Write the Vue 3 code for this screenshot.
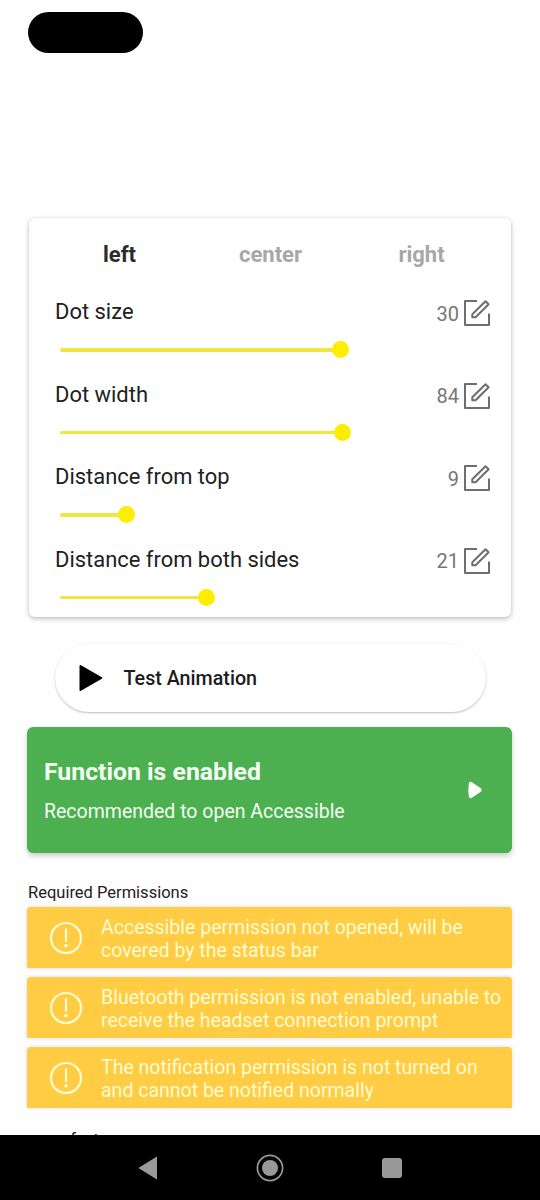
<script setup>
const tabs = [
  { name: 'left', active: true },
  { name: 'center', active: false },
  { name: 'right', active: false },
]
const sliders = [
  { label: 'Dot size', value: 30, length: 280 },
  { label: 'Dot width', value: 84, length: 282.5 },
  { label: 'Distance from top', value: 9, length: 66.5 },
  { label: 'Distance from both sides', value: 21, length: 146.5 },
]
const warnings = [
  ['Accessible permission not opened, will be', 'covered by the status bar'],
  ['Bluetooth permission is not enabled, unable to', 'receive the headset connection prompt'],
  ['The notification permission is not turned on', 'and cannot be notified normally'],
]
</script>

<template>
  <div class="screen">
    <main class="content">
      <div class="island"></div>

      <section class="panel">
        <div class="tabs">
          <span v-for="t in tabs" :key="t.name" class="tab" :class="{ active: t.active }">{{ t.name }}</span>
        </div>
        <div v-for="s in sliders" :key="s.label" class="setting">
          <div class="row">
            <span class="label">{{ s.label }}</span>
            <span class="value">{{ s.value }}</span>
            <svg class="edit" width="28" height="28" viewBox="0 0 28 28">
              <path d="M14 2H2V26H26V14.5" />
              <path d="M9.3 18.2V15.2L22.5 2.2L25.6 5.3L12.6 18.2Z" />
            </svg>
          </div>
          <div class="track" :style="{ width: s.length + 'px' }"><i class="thumb"></i></div>
        </div>
      </section>

      <button class="test">
        <svg width="26" height="30" viewBox="0 0 26 30">
          <path d="M2.5 3L23.3 15L2.5 27Z" />
        </svg>
        <span>Test Animation</span>
      </button>

      <section class="status">
        <div>
          <div class="status-title">Function is enabled</div>
          <div class="status-text">Recommended to open Accessible</div>
        </div>
        <svg width="18" height="20" viewBox="0 0 18 20">
          <path d="M4.8 3.8L13.7 10L4.8 16.2Q3.7 10 4.8 3.8Z" />
        </svg>
      </section>

      <h2 class="heading">Required Permissions</h2>
      <div v-for="w in warnings" :key="w[0]" class="warning">
        <svg width="34" height="34" viewBox="0 0 34 34">
          <circle cx="17" cy="17" r="15" />
          <path d="M17 8V20.2" />
          <circle class="point" cx="17" cy="24.8" r="1.8" />
        </svg>
        <p><span>{{ w[0] }}</span><br /><span>{{ w[1] }}</span></p>
      </div>
      <h2 class="more">more features</h2>
    </main>

    <nav class="navbar">
      <svg width="24" height="28" viewBox="0 0 24 28"><path d="M21 2.5V25.5L2.3 14Z" /></svg>
      <svg width="28" height="28" viewBox="0 0 28 28">
        <circle class="ring" cx="14" cy="14" r="12.6" /><circle cx="14" cy="14" r="8" />
      </svg>
      <svg width="24" height="24" viewBox="0 0 24 24"><rect x="2" y="2" width="20" height="20" rx="3" /></svg>
    </nav>
  </div>
</template>

<style>
body { margin: 0; background: #fefefe; }
</style>

<style scoped>
.screen {
  width: 540px;
  height: 1200px;
  display: flex;
  flex-direction: column;
  overflow: hidden;
  background: #fefefe;
  color: #212121;
  font-family: Roboto, "Liberation Sans", sans-serif;
}
.content {
  height: 1135px;
  flex: none;
  overflow: hidden;
  box-sizing: border-box;
  padding: 12px 28px 0 27px;
}
.island {
  width: 115px;
  height: 41px;
  margin-left: 1px;
  border-radius: 21px;
  background: #000;
}
.panel {
  height: 399px;
  margin: 165px 1px 0 2px;
  box-sizing: border-box;
  padding: 17px 20px 0 26px;
  border-radius: 6px;
  background: #fff;
  box-shadow: 0 2px 5px rgba(0, 0, 0, .22), 0 0 3px rgba(0, 0, 0, .1);
}
.tabs {
  display: grid;
  grid-template-columns: repeat(3, 151px);
  margin: 0 0 0 -11px;
  height: 40px;
  line-height: 40px;
}
.tab {
  text-align: center;
  font-size: 22px;
  font-weight: 700;
  color: #a7a7a7;
}
.tab.active { color: #2c2c2c; }
.setting { height: 82.5px; }
.row {
  height: 62px;
  display: flex;
  align-items: center;
  padding-top: 14px;
  box-sizing: border-box;
}
.label { flex: 1; font-size: 21.95px; padding-bottom: 3px; }
.value { font-size: 20px; color: #777; margin-right: 4px; padding-top: 1px; }
.edit { fill: none; stroke: #6e6e6e; stroke-width: 2; stroke-linejoin: round; }
.track {
  position: relative;
  height: 3.5px;
  margin: 11px 0 0 5px;
  background: #f1e640;
  border-radius: 2px;
}
.thumb {
  position: absolute;
  right: -8.5px;
  top: -6.8px;
  width: 17px;
  height: 17px;
  border-radius: 50%;
  background: #fdee00;
}
.test {
  display: flex;
  align-items: center;
  width: 431px;
  height: 68px;
  margin: 27px 0 0 27.5px;
  padding: 0 0 0 23px;
  border: 0;
  border-radius: 34px;
  background: #fff;
  box-shadow: 0 1px 2px rgba(0, 0, 0, .26);
  color: #1c1c1c;
  font: 500 19.7px Roboto, sans-serif;
}
.test svg { margin-right: 20px; stroke: #000; stroke-width: 2; stroke-linejoin: round; }
.test span { padding-top: 1px; }
.status {
  display: flex;
  align-items: center;
  justify-content: space-between;
  height: 126px;
  margin: 14.5px 0 0;
  padding: 0 28px 0 17px;
  box-sizing: border-box;
  border-radius: 6px;
  background: #4caf50;
  box-shadow: 0 3px 5px rgba(0, 0, 0, .2);
  color: #f4fff3;
}
.status svg { fill: #fff; stroke: #fff; stroke-width: 4; stroke-linejoin: round; }
.status-title { font-size: 24.8px; font-weight: 700; line-height: 30px; margin-top: 2px; }
.status-text { font-size: 19.5px; line-height: 24px; margin-top: 13px; }
.heading { margin: 29.5px 0 4px 1px; font-size: 16.5px; line-height: 21px; font-weight: 400; }
.warning {
  display: flex;
  align-items: center;
  height: 61px;
  margin-bottom: 9px;
  padding-left: 22px;
  border-radius: 4px 4px 1px 1px;
  background: #ffcc43;
  box-shadow: 0 0 4px rgba(0, 0, 0, .14);
  color: #fffbd2;
}
.warning svg { flex: none; fill: none; stroke: #fffbd2; stroke-width: 2.2; stroke-linecap: round; }
.warning .point { fill: #fffbd2; stroke: none; }
.warning p { margin: 2px 0 0 18px; font-size: 19.5px; line-height: 23px; white-space: nowrap; }
.more { margin: 22px 0 0 1px; font-size: 16.5px; line-height: 20px; font-weight: 400; }
.navbar {
  flex: 1;
  display: flex;
  align-items: center;
  justify-content: center;
  gap: 96px;
  background: #000;
}
.navbar svg { fill: #999; }
.navbar .ring { fill: none; stroke: #999; stroke-width: 1.7; }
</style>
